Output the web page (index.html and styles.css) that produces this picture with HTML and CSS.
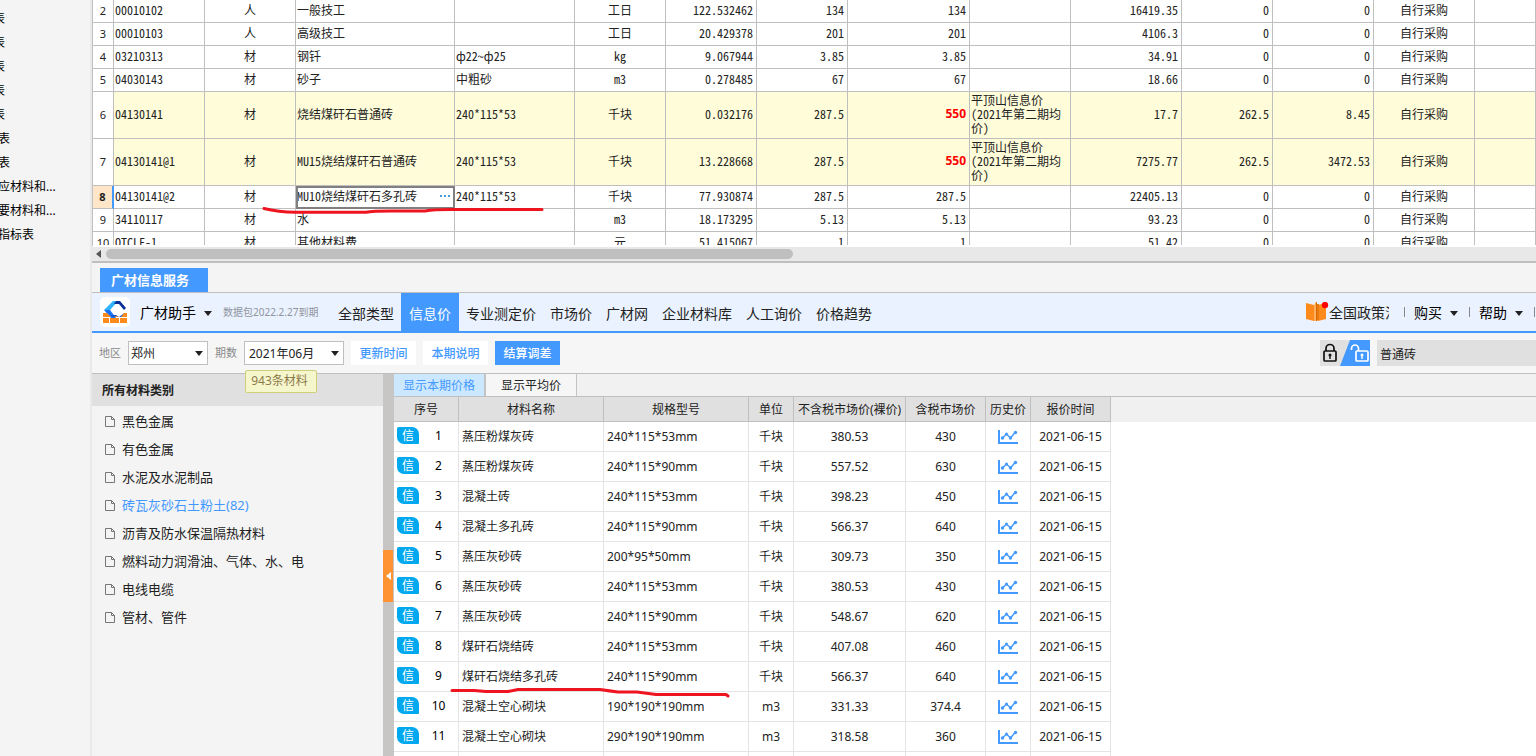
FILE: index.html
```html
<!DOCTYPE html>
<html lang="zh-CN">
<head>
<meta charset="utf-8">
<title>广材信息服务</title>
<link rel="stylesheet" href="styles.css">
</head>
<body>
<svg class="defs" aria-hidden="true">
  <symbol id="doc" viewBox="0 0 12 14"><path d="M1.500 2.500h6l3 3v7h-9zM7.500 2.500v3h3" fill="none" stroke="#777"/></symbol>
  <symbol id="chart" viewBox="0 0 20 14"><path d="M0 0h2v12h18v2H0z" fill="#4499ff"/><path d="M4.500 8l4-4 4 4 5-6" fill="none" stroke="#4499ff" stroke-width="1.500"/><g fill="#4499ff"><circle cx="4.500" cy="8" r="1.700"/><circle cx="8.500" cy="4" r="1.500"/><circle cx="12.500" cy="8" r="1.700"/><circle cx="17.500" cy="2.500" r="1.700"/></g></symbol>
  <symbol id="caret" viewBox="0 0 8 5"><path d="M0 0h8L4 5z" fill="#222"/></symbol>
</svg>
<div class="app">
  <aside class="reports">
    <ul>
      <li class="far">表</li><li class="far">表</li><li class="far">表</li><li class="far">表</li><li class="far">表</li>
      <li>表</li><li>表</li><li>应材料和...</li><li>要材料和...</li><li>指标表</li>
    </ul>
  </aside>
  <main class="main">
    <div class="sheet">
      <table class="grid">
        <colgroup><col class="c21"><col class="c91"><col class="c91"><col class="c159"><col class="c120"><col class="c91"><col class="c91"><col class="c91"><col class="c122"><col class="c101"><col class="c111"><col class="c91"><col class="c101"><col class="c101"><col></colgroup>
        <tbody>
        <tr><th>2</th><td>00010102</td><td class="c">人</td><td>一般技工</td><td></td><td class="c">工日</td><td class="r">122.532462</td><td class="r">134</td><td class="r">134</td><td></td><td class="r">16419.35</td><td class="r">0</td><td class="r">0</td><td class="c">自行采购</td><td></td></tr>
        <tr><th>3</th><td>00010103</td><td class="c">人</td><td>高级技工</td><td></td><td class="c">工日</td><td class="r">20.429378</td><td class="r">201</td><td class="r">201</td><td></td><td class="r">4106.3</td><td class="r">0</td><td class="r">0</td><td class="c">自行采购</td><td></td></tr>
        <tr><th>4</th><td>03210313</td><td class="c">材</td><td>钢钎</td><td>ф22~ф25</td><td class="c">kg</td><td class="r">9.067944</td><td class="r">3.85</td><td class="r">3.85</td><td></td><td class="r">34.91</td><td class="r">0</td><td class="r">0</td><td class="c">自行采购</td><td></td></tr>
        <tr><th>5</th><td>04030143</td><td class="c">材</td><td>砂子</td><td>中粗砂</td><td class="c">m3</td><td class="r">0.278485</td><td class="r">67</td><td class="r">67</td><td></td><td class="r">18.66</td><td class="r">0</td><td class="r">0</td><td class="c">自行采购</td><td></td></tr>
        <tr class="tall"><th>6</th><td>04130141</td><td class="c">材</td><td>烧结煤矸石普通砖</td><td>240*115*53</td><td class="c">千块</td><td class="r">0.032176</td><td class="r">287.5</td><td class="r hot">550</td><td class="src">平顶山信息价<br>(2021年第二期均<br>价)</td><td class="r">17.7</td><td class="r">262.5</td><td class="r">8.45</td><td class="c">自行采购</td><td></td></tr>
        <tr class="tall"><th>7</th><td>04130141@1</td><td class="c">材</td><td>MU15烧结煤矸石普通砖</td><td>240*115*53</td><td class="c">千块</td><td class="r">13.228668</td><td class="r">287.5</td><td class="r hot">550</td><td class="src">平顶山信息价<br>(2021年第二期均<br>价)</td><td class="r">7275.77</td><td class="r">262.5</td><td class="r">3472.53</td><td class="c">自行采购</td><td></td></tr>
        <tr><th class="current">8</th><td>04130141@2</td><td class="c">材</td><td class="editing"><div class="cell"><span>MU10烧结煤矸石多孔砖</span><button class="more" aria-label="更多"><i></i><i></i><i></i></button></div></td><td>240*115*53</td><td class="c">千块</td><td class="r">77.930874</td><td class="r">287.5</td><td class="r">287.5</td><td></td><td class="r">22405.13</td><td class="r">0</td><td class="r">0</td><td class="c">自行采购</td><td></td></tr>
        <tr><th>9</th><td>34110117</td><td class="c">材</td><td>水</td><td></td><td class="c">m3</td><td class="r">18.173295</td><td class="r">5.13</td><td class="r">5.13</td><td></td><td class="r">93.23</td><td class="r">0</td><td class="r">0</td><td class="c">自行采购</td><td></td></tr>
        <tr><th>10</th><td>QTCLF-1</td><td class="c">材</td><td>其他材料费</td><td></td><td class="c">元</td><td class="r">51.415067</td><td class="r">1</td><td class="r">1</td><td></td><td class="r">51.42</td><td class="r">0</td><td class="r">0</td><td class="c">自行采购</td><td></td></tr>
        </tbody>
      </table>
    </div>
    <div class="hscroll"><svg width="5" height="8" viewBox="0 0 5 8"><path d="M5 0v8L0 4z" fill="#555"/></svg><div class="thumb"></div></div>

    <div class="docktabs"><button class="docktab">广材信息服务</button></div>
    <header class="bar">
      <svg class="logo" width="30" height="30" viewBox="0 0 30 30"><rect width="30" height="30" rx="5" fill="#fff"/><path d="M4 13L13 4h5l-8 9z" fill="#2fb4fb"/><path d="M4 13h6l6 8h-5z" fill="#1a70f5"/><path d="M16 4h4l6 7-2 2-5-6h-5z" fill="#0b2f96"/><path d="M11 18h5l3 2 4-3 2-1-3 4H13z" fill="#0b50d8"/><path d="M3 16h4l4 4H3zM14 20l2-1 3 1zM27 16v4h-6l3-4zM3 21h6v5H3zM10 21h9v5h-9zM20 21h7v5h-7z" fill="#ff8a1c"/></svg>
      <button class="menu brand">广材助手<svg width="8" height="5"><use href="#caret"/></svg></button>
      <span class="expiry">数据包2022.2.27到期</span>
      <nav class="nav">
        <a href="#">全部类型</a><a href="#" class="on">信息价</a><a href="#">专业测定价</a><a href="#">市场价</a><a href="#">广材网</a><a href="#">企业材料库</a><a href="#">人工询价</a><a href="#">价格趋势</a>
      </nav>
      <div class="tools">
        <svg width="23" height="20" viewBox="0 0 23 20"><path d="M0 1l8 2v16l-8-2z" fill="#ff8a1c"/><path d="M20 1l-8 2v16l8-2z" fill="#ff8a1c"/><path d="M8 3l2-3v19H8z" fill="#ffb060"/><path d="M10 0h1v19h-1z" fill="#d96a00"/><path d="M11 2h2v15l-2 2z" fill="#e67c10"/><circle cx="19" cy="3" r="3.200" fill="#f00"/></svg>
        <a href="#" class="policy">全国政策法</a>
        <i class="sep"></i>
        <button class="menu">购买<svg width="8" height="5"><use href="#caret"/></svg></button>
        <i class="sep"></i>
        <button class="menu">帮助<svg width="8" height="5"><use href="#caret"/></svg></button>
        <i class="sep"></i>
      </div>
    </header>
    <div class="filters">
      <label for="area">地区</label>
      <div class="pick area"><select id="area"><option>郑州</option></select><svg width="8" height="5"><use href="#caret"/></svg></div>
      <label for="period">期数</label>
      <div class="pick period"><select id="period"><option>2021年06月</option></select><svg width="8" height="5"><use href="#caret"/></svg><div class="tip">943条材料</div></div>
      <button class="btn">更新时间</button>
      <button class="btn">本期说明</button>
      <button class="btn primary">结算调差</button>
      <button class="lock" aria-label="锁定"><svg width="50" height="26" viewBox="0 0 50 26"><rect width="50" height="26" fill="#e0e0e0"/><path d="M30 0h20v26H20z" fill="#4499ff"/><g fill="none" stroke="#111" stroke-width="1.700"><rect x="4" y="11" width="12" height="10" rx="1"/><path d="M6 11V8.500a4 4 0 0 1 8 0V11"/></g><circle cx="10" cy="15" r="1.500" fill="#111"/><path d="M9.300 15h1.400v4H9.300z" fill="#111"/><g fill="none" stroke="#fff" stroke-width="1.700"><rect x="36" y="11" width="12" height="10" rx="1"/><path d="M38.500 11V8.500a3.500 3.500 0 0 0-7 0v1.500"/></g><circle cx="42" cy="15" r="1.500" fill="#fff"/><path d="M41.300 15h1.400v4h-1.400z" fill="#fff"/></svg></button>
      <input class="search" type="text" value="普通砖" aria-label="搜索材料">
    </div>
    <div class="work">
      <section class="cats">
        <h2>所有材料类别</h2>
        <ul>
          <li><svg width="12" height="14"><use href="#doc"/></svg>黑色金属</li>
          <li><svg width="12" height="14"><use href="#doc"/></svg>有色金属</li>
          <li><svg width="12" height="14"><use href="#doc"/></svg>水泥及水泥制品</li>
          <li class="on"><svg width="12" height="14"><use href="#doc"/></svg>砖瓦灰砂石土粉土(82)</li>
          <li><svg width="12" height="14"><use href="#doc"/></svg>沥青及防水保温隔热材料</li>
          <li><svg width="12" height="14"><use href="#doc"/></svg>燃料动力润滑油、气体、水、电</li>
          <li><svg width="12" height="14"><use href="#doc"/></svg>电线电缆</li>
          <li><svg width="12" height="14"><use href="#doc"/></svg>管材、管件</li>
        </ul>
      </section>
      <div class="splitter"><button class="fold" aria-label="收起"><svg width="5" height="8" viewBox="0 0 5 8"><path d="M5 0v8L0 4z" fill="#fff"/></svg></button></div>
      <section class="prices">
        <div class="tabs"><button class="on">显示本期价格</button><button>显示平均价</button></div>
        <div class="headfill">
        <table class="list">
          <colgroup><col class="w65"><col class="w145"><col class="w145"><col class="w45"><col class="w112"><col class="w80"><col class="w45"><col class="w80"></colgroup>
          <thead><tr><th>序号</th><th>材料名称</th><th>规格型号</th><th>单位</th><th>不含税市场价(裸价)</th><th>含税市场价</th><th>历史价</th><th>报价时间</th></tr></thead>
          <tbody>
          <tr><td><div class="no"><b>信</b><span>1</span></div></td><td class="l">蒸压粉煤灰砖</td><td class="l">240*115*53mm</td><td>千块</td><td>380.53</td><td>430</td><td><svg width="20" height="14"><use href="#chart"/></svg></td><td>2021-06-15</td></tr>
          <tr><td><div class="no"><b>信</b><span>2</span></div></td><td class="l">蒸压粉煤灰砖</td><td class="l">240*115*90mm</td><td>千块</td><td>557.52</td><td>630</td><td><svg width="20" height="14"><use href="#chart"/></svg></td><td>2021-06-15</td></tr>
          <tr><td><div class="no"><b>信</b><span>3</span></div></td><td class="l">混凝土砖</td><td class="l">240*115*53mm</td><td>千块</td><td>398.23</td><td>450</td><td><svg width="20" height="14"><use href="#chart"/></svg></td><td>2021-06-15</td></tr>
          <tr><td><div class="no"><b>信</b><span>4</span></div></td><td class="l">混凝土多孔砖</td><td class="l">240*115*90mm</td><td>千块</td><td>566.37</td><td>640</td><td><svg width="20" height="14"><use href="#chart"/></svg></td><td>2021-06-15</td></tr>
          <tr><td><div class="no"><b>信</b><span>5</span></div></td><td class="l">蒸压灰砂砖</td><td class="l">200*95*50mm</td><td>千块</td><td>309.73</td><td>350</td><td><svg width="20" height="14"><use href="#chart"/></svg></td><td>2021-06-15</td></tr>
          <tr><td><div class="no"><b>信</b><span>6</span></div></td><td class="l">蒸压灰砂砖</td><td class="l">240*115*53mm</td><td>千块</td><td>380.53</td><td>430</td><td><svg width="20" height="14"><use href="#chart"/></svg></td><td>2021-06-15</td></tr>
          <tr><td><div class="no"><b>信</b><span>7</span></div></td><td class="l">蒸压灰砂砖</td><td class="l">240*115*90mm</td><td>千块</td><td>548.67</td><td>620</td><td><svg width="20" height="14"><use href="#chart"/></svg></td><td>2021-06-15</td></tr>
          <tr><td><div class="no"><b>信</b><span>8</span></div></td><td class="l">煤矸石烧结砖</td><td class="l">240*115*53mm</td><td>千块</td><td>407.08</td><td>460</td><td><svg width="20" height="14"><use href="#chart"/></svg></td><td>2021-06-15</td></tr>
          <tr><td><div class="no"><b>信</b><span>9</span></div></td><td class="l">煤矸石烧结多孔砖</td><td class="l">240*115*90mm</td><td>千块</td><td>566.37</td><td>640</td><td><svg width="20" height="14"><use href="#chart"/></svg></td><td>2021-06-15</td></tr>
          <tr><td><div class="no"><b>信</b><span>10</span></div></td><td class="l">混凝土空心砌块</td><td class="l">190*190*190mm</td><td>m3</td><td>331.33</td><td>374.4</td><td><svg width="20" height="14"><use href="#chart"/></svg></td><td>2021-06-15</td></tr>
          <tr><td><div class="no"><b>信</b><span>11</span></div></td><td class="l">混凝土空心砌块</td><td class="l">290*190*190mm</td><td>m3</td><td>318.58</td><td>360</td><td><svg width="20" height="14"><use href="#chart"/></svg></td><td>2021-06-15</td></tr>
          <tr><td></td><td></td><td></td><td></td><td></td><td></td><td></td><td></td></tr>
          </tbody>
        </table>
        </div>
      </section>
    </div>
  </main>
  <svg class="ink" width="740" height="700" viewBox="0 0 740 700" fill="none" stroke="#ee1420" stroke-width="3" stroke-linecap="round" stroke-linejoin="round"><path d="M264 208.500Q278 212 296 212.300H366Q372 211 392 211H425Q434 209.500 450 209.500H542"/><path d="M452 690.500H474L486 691.500H508L518 689.500H600Q610 691 618 692H637L656 694.500H726L728 696"/></svg>
</div>
</body>
</html>
```
FILE: styles.css
```css
* { box-sizing: border-box; }
body {
  margin: 0;
  height: 100vh;
  overflow: hidden;
  background: #f4f4f4;
  color: #222;
  font: 12px/18px "Noto Sans", "Noto Sans CJK SC", sans-serif;
}
button, input, select { font: inherit; color: inherit; border: 0; padding: 0; margin: 0; background: none; border-radius: 0; }
a { color: inherit; text-decoration: none; }
ul { list-style: none; margin: 0; padding: 0; }
svg { display: block; flex: none; }
.defs { position: absolute; width: 0; height: 0; }
.app { position: relative; display: flex; height: 100%; }
.ink { position: absolute; left: 0; top: 0; pointer-events: none; }

/* report list */
.reports { flex: none; width: 92px; border-right: 2px solid #e9e9e9; overflow: hidden; padding-top: 7px; color: #000; }
.reports li { height: 24px; line-height: 24px; margin-left: -2px; white-space: nowrap; }
.reports .far { margin-left: -7px; }

.main { flex: 1; min-width: 0; display: flex; flex-direction: column; }

/* quantity sheet */
.sheet { flex: none; height: 247px; overflow: hidden; background: #fff; border-left: 1px solid #bfbfbf; border-bottom: 2px solid #fff; }
.grid { width: 100%; table-layout: fixed; border-collapse: separate; border-spacing: 0; font-family: "Noto Sans Mono CJK SC", "Noto Sans CJK SC", monospace; line-height: 14px; }
.grid td, .grid th { height: 23px; padding: 0 3px 2px 1px; border-right: 1px solid #bfbfbf; border-bottom: 1px solid #bfbfbf; white-space: nowrap; }
.grid th { padding: 0; font: 11px/14px "Noto Sans", sans-serif; text-align: center; background: #fff; }
.grid th.current { background: #ffe6c8; border-right: 2px solid #4499ff; font-weight: 700; }
.grid .tall td, .grid .tall th { height: 47px; }
.grid .tall td { background: #fffcd9; }
.grid .c { text-align: center; padding: 0 0 2px; }
.grid .r { text-align: right; }
.grid .hot { color: #f00; font-family: "Noto Sans", sans-serif; font-weight: 700; }
.grid .editing { outline: 2px solid #808080; outline-offset: -2px; }
.cell { display: flex; justify-content: space-between; align-items: center; }
.more { display: flex; gap: 2px; padding: 3px 1px; }
.more i { width: 2px; height: 2px; background: #4a9bd9; }
.c21 { width: 21px; } .c91 { width: 91px; } .c101 { width: 101px; } .c111 { width: 111px; }
.c120 { width: 120px; } .c122 { width: 122px; } .c159 { width: 159px; }
.hscroll { flex: none; display: flex; align-items: center; gap: 5px; height: 16px; padding-left: 4px; background: #e8e8e8; border-bottom: 2px solid #bfbfbf; }
.thumb { width: 687px; height: 10px; border-radius: 5px; background: #bfbfbf; }

/* service panel */
.docktabs { flex: none; height: 30px; padding: 5px 0 0 8px; border-bottom: 1px solid #bfbfbf; }
.docktab { width: 108px; height: 24px; padding-right: 8px; background: #4499ff; color: #fff; font-size: 13px; font-weight: 700; }
.bar { flex: none; display: flex; align-items: center; height: 40px; padding-left: 8px; background: #ebf2ff; border-bottom: 2px solid #4499ff; font-size: 14px; white-space: nowrap; }
.menu { display: flex; align-items: center; gap: 8px; padding-top: 2px; color: #000; }
.brand { margin: 0 11px 0 10px; }
.expiry { flex: none; width: 100px; color: #8f959e; font-size: 10px; }
.nav { display: flex; align-self: stretch; margin-left: 8px; }
.nav a { display: flex; align-items: center; padding: 3px 7px 0; }
.nav .on { padding: 3px 8px 0; background: #4499ff; color: #fff; }
.tools { display: flex; align-items: center; margin-left: auto; }
.policy { width: 60px; overflow: hidden; margin-right: 15px; padding-top: 1px; }
.sep { width: 1px; height: 10px; background: #888; }
.tools .menu { margin: 0 11px 0 9px; }
.tools .sep:last-child { margin-right: 1px; }

.filters { flex: none; display: flex; align-items: center; height: 41px; padding-left: 7px; background: #f6f6f6; border-bottom: 1px solid #bfbfbf; }
.filters label { width: 29px; color: #8a8a8a; font-size: 11px; }
.pick { position: relative; height: 24px; margin-right: 7px; background: #fff; border: 1px solid #bfbfbf; display: flex; align-items: center; padding-right: 4px; }
.pick select { appearance: none; flex: 1; min-width: 0; height: 22px; padding: 1px 0 0 2px; outline: 0; }
.area { width: 80px; }
.period { width: 100px; }
.pick.period select { padding-left: 4px; }
.tip { position: absolute; z-index: 2; left: 0; top: 28px; width: 72px; height: 23px; padding-right: 3px; border: 1px solid #cfcf7a; border-radius: 2px; background: #f6f6cc; color: #8c7a4a; text-align: center; line-height: 20px; }
.btn { width: 65px; height: 24px; margin-right: 7px; padding-top: 1px; background: #fff; color: #4499ff; font-weight: 500; }
.primary { background: #4499ff; color: #fff; }
.lock { margin: 0 7px 0 auto; }
.search { width: 159px; height: 26px; padding: 1px 0 0 3px; background: #e0e0e0; }

.work { flex: 1; min-height: 0; display: flex; }
.cats { flex: none; width: 291px; background: #f4f4f4; }
.cats h2 { height: 32px; margin: 0; padding: 1px 0 0 10px; background: #e0e0e0; font-size: 12px; line-height: 32px; }
.cats ul { padding-top: 1px; }
.cats li { display: flex; align-items: center; gap: 6px; height: 28px; padding-left: 12px; font-size: 13px; }
.cats li.on { color: #4499ff; }
.splitter { flex: none; width: 11px; background: #c8c6c5; padding-top: 176px; }
.fold { display: flex; align-items: center; justify-content: center; width: 10px; height: 52px; background: #ff9233; }
.prices { flex: 1; min-width: 0; overflow: hidden; background: #fff; }
.tabs { display: flex; height: 23px; background: #f1f1f1; border-bottom: 1px solid #bfbfbf; }
.tabs button { width: 91px; padding-top: 2px; background: #f6f6f6; border-right: 1px solid #c4c4c4; }
.tabs .on { width: 92px; background: #cce8ff; color: #4499ff; border-right-width: 2px; }
.headfill { background: linear-gradient(#f0f0f0, #f0f0f0) 0 0 / 100% 25px no-repeat; }
.list { width: 717px; table-layout: fixed; border-collapse: separate; border-spacing: 0; }
.list th { height: 25px; padding: 2px 0 0; background: #e0e0e0; border-right: 1px solid #bfbfbf; border-bottom: 1px solid #bfbfbf; font-weight: 400; white-space: nowrap; }
.list td { height: 30px; padding: 0; border-right: 1px solid #e4e4e4; border-bottom: 1px solid #e4e4e4; text-align: center; }
.list .l { text-align: left; padding-left: 3px; }
.list td svg { margin: 0 auto; }
.no { display: flex; align-items: center; padding: 0 0 2px 3px; }
.no b { width: 22px; height: 17px; border-radius: 2px 7px 1px 7px; background: #00a8f0; color: #fff; font-weight: 400; line-height: 17px; }
.no span { flex: 1; color: #000; }
.w45 { width: 45px; } .w65 { width: 65px; } .w80 { width: 80px; } .w112 { width: 112px; } .w145 { width: 145px; }
```
